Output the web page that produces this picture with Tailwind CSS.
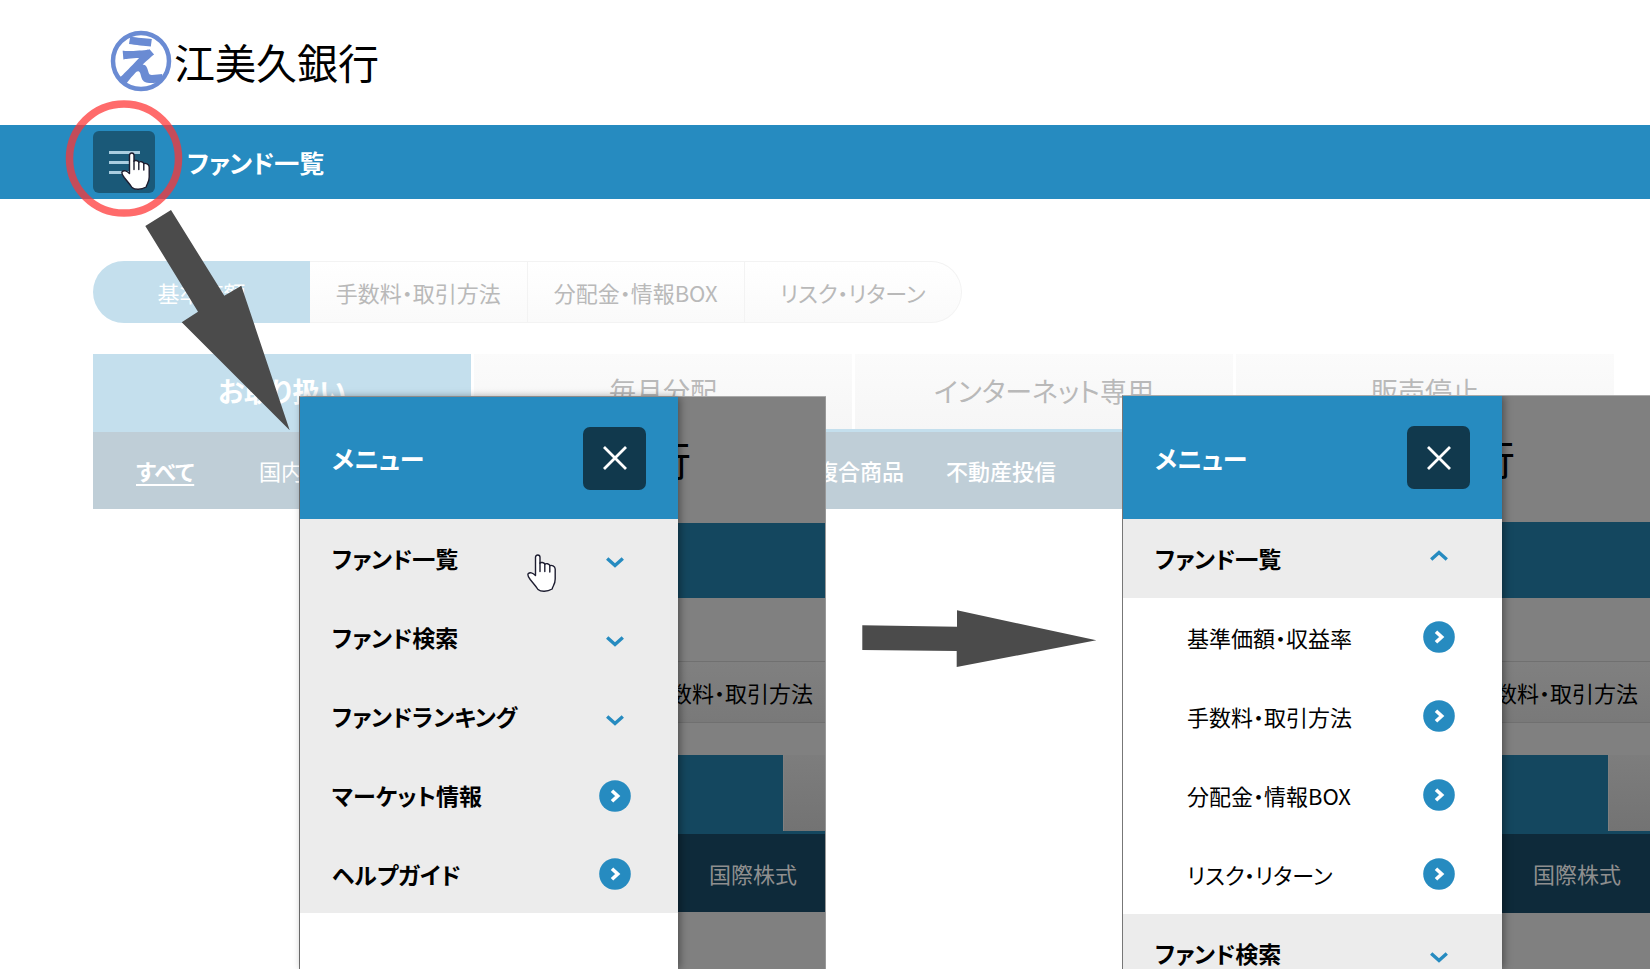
<!DOCTYPE html>
<html lang="ja">
<head>
<meta charset="utf-8">
<meta name="viewport" content="width=device-width, initial-scale=1">
<title>江美久銀行 ファンド一覧</title>
<script src="https://cdn.jsdelivr.net/npm/@tailwindcss/browser@4"></script>
</head>
<body class="bg-white text-black font-['Noto_Sans_CJK_JP',sans-serif] [font-feature-settings:'palt']">
<svg class="hidden" aria-hidden="true">
  <symbol id="hand" viewBox="0 0 30 39">
    <path d="M8.500 21.500V3.200C8.500 .2 13 .2 13 3.200V9.200C13.500 8 17.300 8.200 17.800 10.200C19 9 22.300 9.700 22.800 11.700C24.500 10.800 28 12 28.200 15V25C28.200 31 25.500 32 25.200 35C20 38 14 38 11 35.500C8.500 31.500 6 29 3.200 25.500C1 22.500.2 21 1.200 19.800C2.800 18 5.500 18.500 8.500 21.500Z" fill="#fff" stroke="#1d1d30" stroke-width="1.400" stroke-linejoin="round"/>
    <path d="M13 9V17.500M17.800 10V17.500M22.800 11.500V18" fill="none" stroke="#1d1d30" stroke-width="1.400" stroke-linecap="round"/>
  </symbol>
  <symbol id="down" viewBox="0 0 18 12"><path d="M1.200 1.500L9 8.500L16.800 1.500" fill="none" stroke="#268bc0" stroke-width="3.400"/></symbol>
  <symbol id="up" viewBox="0 0 18 12"><path d="M1.200 10.500L9 3.500L16.800 10.500" fill="none" stroke="#268bc0" stroke-width="3.400"/></symbol>
  <symbol id="go" viewBox="0 0 32 32"><circle cx="16" cy="16" r="15.800" fill="#268bc0"/><path d="M13 10.700L18.700 16L13 21.300" fill="none" stroke="#fff" stroke-width="3.600"/></symbol>
  <symbol id="close" viewBox="0 0 26 26"><path d="M2 2L24 24M24 2L2 24" fill="none" stroke="#fff" stroke-width="2.800"/></symbol>
</svg>

<div class="relative h-screen overflow-hidden">
  <header>
    <div class="flex h-[125px] items-center pb-1 pl-[110px]">
      <svg class="h-[62px] w-[62px]" viewBox="0 0 62 62" role="img" aria-label="え">
        <circle cx="31" cy="31" r="28" fill="#fff" stroke="#6a8bd3" stroke-width="4.500"/>
        <text x="31" y="50" text-anchor="middle" font-size="52" font-weight="900" fill="#6a8bd3">え</text>
      </svg>
      <span class="ml-[2px] text-[41px] leading-[48px]">江美久銀行</span>
    </div>
    <div class="flex h-[74px] items-center bg-[#268bc0] pl-[93px]">
      <button type="button" aria-label="メニューを開く" class="flex h-[62px] w-[62px] flex-col items-center justify-center gap-[7px] rounded-[6px] bg-[#1a5978]">
        <span class="h-[3px] w-[31px] bg-[#a9cde0]"></span>
        <span class="h-[3px] w-[31px] bg-[#a9cde0]"></span>
        <span class="h-[3px] w-[31px] bg-[#a9cde0]"></span>
      </button>
      <h1 class="ml-8 text-[25px] leading-8 font-bold text-white">ファンド一覧</h1>
    </div>
  </header>

  <main class="pt-[62px] pr-9 pl-[93px]">
    <nav class="grid h-[62px] w-[869px] grid-cols-4 text-[22px] text-[#b9b9b9]">
      <a href="#" class="flex items-center justify-center rounded-l-full bg-[#c4dfed] text-white">基準価額</a>
      <a href="#" class="flex items-center justify-center border-y border-r border-[#f3f3f3] bg-linear-to-b from-white to-[#fafafa]">手数料・取引方法</a>
      <a href="#" class="flex items-center justify-center border-y border-r border-[#f3f3f3] bg-linear-to-b from-white to-[#fafafa]">分配金・情報BOX</a>
      <a href="#" class="flex items-center justify-center rounded-r-full border-y border-r border-[#f3f3f3] bg-linear-to-b from-white to-[#fafafa]">リスク・リターン</a>
    </nav>
    <nav class="mt-[31px] grid h-[78px] grid-cols-4 gap-x-[3px] border-b-[3px] border-[#c4dfed] text-[27px] text-[#b9b9b9]">
      <a href="#" class="flex items-center justify-center bg-[#c4dfed] font-bold text-white">お取り扱い</a>
      <a href="#" class="flex items-center justify-center bg-linear-to-b from-[#fbfbfb] to-[#f6f6f6]">毎月分配</a>
      <a href="#" class="flex items-center justify-center bg-linear-to-b from-[#fbfbfb] to-[#f6f6f6]">インターネット専用</a>
      <a href="#" class="flex items-center justify-center bg-linear-to-b from-[#fbfbfb] to-[#f6f6f6]">販売停止</a>
    </nav>
    <nav class="flex h-[77px] items-center bg-[#bfced7] pl-[43px] text-[22px] text-white">
      <a href="#" class="w-[123px] font-bold underline underline-offset-4">すべて</a>
      <a href="#" class="w-[557px]">国内株式</a>
      <a href="#" class="w-[130px] font-medium">複合商品</a>
      <a href="#" class="font-medium">不動産投信</a>
    </nav>
  </main>

  <!-- Step 1: drawer open, all groups closed -->
  <section class="absolute top-[396px] bottom-0 left-[299px] flex w-[527px] border-t border-l border-t-[#aaa] border-l-[#777] bg-[#808080]">
    <div class="relative z-10 w-[378px] bg-white shadow-[2px_0_8px_rgba(0,0,0,0.4)]">
      <div class="flex h-[122px] items-center justify-between bg-[#268bc0] pr-8 pl-8">
        <h2 class="text-[25px] leading-8 font-bold text-white">メニュー</h2>
        <button type="button" aria-label="閉じる" class="flex h-[63px] w-[63px] items-center justify-center rounded-[7px] bg-[#11394d]"><svg class="h-[26px] w-[26px]"><use href="#close"/></svg></button>
      </div>
      <ul class="bg-[#ececec] text-[23px] font-bold">
        <li><a href="#" class="flex h-[79px] items-center justify-between pr-[54px] pl-8">ファンド一覧<svg class="mt-2 h-3 w-[18px]"><use href="#down"/></svg></a></li>
        <li><a href="#" class="flex h-[79px] items-center justify-between pr-[54px] pl-8">ファンド検索<svg class="mt-2 h-3 w-[18px]"><use href="#down"/></svg></a></li>
        <li><a href="#" class="flex h-[79px] items-center justify-between pr-[54px] pl-8">ファンドランキング<svg class="mt-2 h-3 w-[18px]"><use href="#down"/></svg></a></li>
        <li><a href="#" class="flex h-[79px] items-center justify-between pr-[47px] pl-8">マーケット情報<svg class="h-8 w-8"><use href="#go"/></svg></a></li>
        <li><a href="#" class="flex h-[78px] items-center justify-between pr-[47px] pl-8">ヘルプガイド<svg class="h-8 w-8"><use href="#go"/></svg></a></li>
      </ul>
      <svg class="absolute top-[157px] left-[227px] h-[39px] w-[30px]"><use href="#hand"/></svg>
    </div>
    <div class="min-w-0 flex-1 overflow-hidden border-r border-[#999]">
      <div class="flex h-[122px] w-[13px] items-center justify-end text-[41px] leading-[48px]"><span>行</span></div>
      <div class="mt-1 h-[75px] bg-[#14475f]"></div>
      <div class="mt-[63px] flex h-[62px] items-center justify-end border-y border-t-[#707070] border-b-[#707070] bg-linear-to-b from-[#808080] to-[#797979] pr-[12px] text-[22px] whitespace-nowrap"><span>手数料・取引方法</span></div>
      <div class="mt-8 flex h-[79px] border-b-[3px] border-[#14475f]">
        <div class="w-[105px] bg-[#14475f]"></div>
        <div class="ml-px flex-1 bg-linear-to-b from-[#7d7d7d] to-[#737373]"></div>
      </div>
      <div class="flex h-[78px] items-center bg-[#0e2a3a] pl-[31px] text-[22px] text-[#8f8f8f]">国際株式</div>
    </div>
  </section>

  <!-- Step 2: first group expanded -->
  <section class="absolute top-[395px] right-0 bottom-0 left-[1122px] flex overflow-hidden border-t border-l border-t-[#aaa] border-l-[#777] bg-[#808080]">
    <div class="relative z-10 w-[379px] shrink-0 bg-white shadow-[2px_0_8px_rgba(0,0,0,0.4)]">
      <div class="flex h-[123px] items-center justify-between bg-[#268bc0] pr-8 pl-8">
        <h2 class="text-[25px] leading-8 font-bold text-white">メニュー</h2>
        <button type="button" aria-label="閉じる" class="flex h-[63px] w-[63px] items-center justify-center rounded-[7px] bg-[#11394d]"><svg class="h-[26px] w-[26px]"><use href="#close"/></svg></button>
      </div>
      <a href="#" class="flex h-[79px] items-center justify-between bg-[#ececec] pr-[54px] pl-8 text-[23px] font-bold">ファンド一覧<svg class="mb-2 h-3 w-[18px]"><use href="#up"/></svg></a>
      <ul class="text-[22px]">
        <li><a href="#" class="flex h-[79px] items-center justify-between pr-[47px] pl-16">基準価額・収益率<svg class="mb-0.5 h-8 w-8"><use href="#go"/></svg></a></li>
        <li><a href="#" class="flex h-[79px] items-center justify-between pr-[47px] pl-16">手数料・取引方法<svg class="mb-0.5 h-8 w-8"><use href="#go"/></svg></a></li>
        <li><a href="#" class="flex h-[79px] items-center justify-between pr-[47px] pl-16">分配金・情報BOX<svg class="mb-0.5 h-8 w-8"><use href="#go"/></svg></a></li>
        <li><a href="#" class="flex h-[79px] items-center justify-between pr-[47px] pl-16">リスク・リターン<svg class="mb-0.5 h-8 w-8"><use href="#go"/></svg></a></li>
      </ul>
      <a href="#" class="flex h-[79px] items-center justify-between bg-[#ececec] pr-[54px] pl-8 text-[23px] font-bold">ファンド検索<svg class="mt-2 h-3 w-[18px]"><use href="#down"/></svg></a>
    </div>
    <div class="min-w-0 flex-1 overflow-hidden">
      <div class="flex h-[122px] w-[13px] items-center justify-end text-[41px] leading-[48px]"><span>行</span></div>
      <div class="mt-1 h-[76px] bg-[#14475f]"></div>
      <div class="mt-[63px] flex h-[62px] items-center justify-end border-y border-t-[#707070] border-b-[#707070] bg-linear-to-b from-[#808080] to-[#797979] pr-[12px] text-[22px] whitespace-nowrap"><span>手数料・取引方法</span></div>
      <div class="mt-8 flex h-[79px] border-b-[3px] border-[#14475f]">
        <div class="w-[106px] bg-[#14475f]"></div>
        <div class="ml-px flex-1 bg-linear-to-b from-[#7d7d7d] to-[#737373]"></div>
      </div>
      <div class="flex h-[79px] items-center bg-[#0e2a3a] pl-[31px] text-[22px] whitespace-nowrap text-[#8f8f8f]">国際株式</div>
    </div>
  </section>

  <!-- Annotations: highlight ring, pointer and arrows -->
  <svg class="pointer-events-none absolute top-0 left-0 z-20 h-[969px] w-[1650px]" viewBox="0 0 1650 969" aria-hidden="true">
    <use href="#hand" x="121" y="152" width="30" height="39"/>
    <circle cx="124" cy="158.500" r="54.500" fill="none" stroke="#ff3434" stroke-opacity=".73" stroke-width="7.500"/>
    <path d="M145.300 226L171 210L224.300 295.700L241.300 285.700L289.700 430.300L181.700 322.300L198 311.700Z" fill="#4b4b4b"/>
    <path d="M862.300 625.300L957 626.700V610.300L1096.300 640.300L956.700 667V651L862.300 650Z" fill="#4b4b4b"/>
  </svg>
</div>
</body>
</html>
